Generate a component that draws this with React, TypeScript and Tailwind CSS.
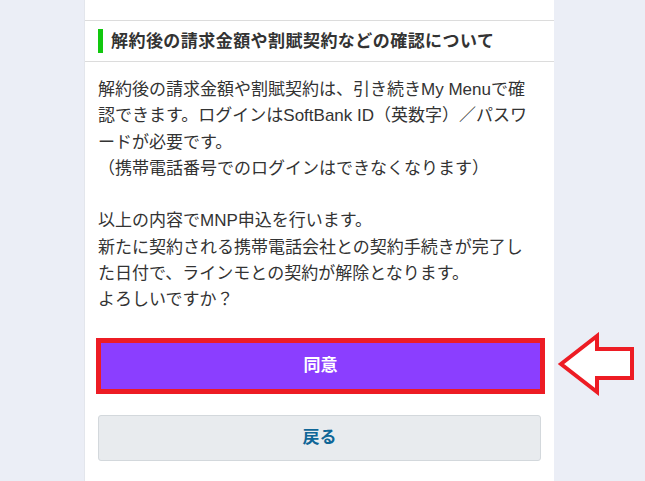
import React from 'react';

function LeftArrow() {
  return (
    <svg
      className="absolute left-[556px] top-[332px]"
      width="82"
      height="66"
      viewBox="0 0 82 66"
      fill="none"
    >
      <path
        d="M5 32 L41 4 L41 17 L76 17 L76 46 L41 46 L41 60 Z"
        fill="#ffffff"
        stroke="#ed1c24"
        strokeWidth="4"
        strokeLinejoin="miter"
      />
    </svg>
  );
}

export default function App() {
  return (
    <div
      className="relative w-[645px] h-[481px] overflow-hidden bg-[#ebeef6]"
      style={{ fontFamily: '"Liberation Sans", "Noto Sans CJK JP", sans-serif' }}
    >
      <div className="ml-[84px] w-[470px] h-full bg-white border-l border-[#e3e6ec]">
        <div className="h-[21px] border-b border-[#dcdcdc]" />

        <div className="h-[41px] flex items-center pl-[13px] border-b border-[#dcdcdc]">
          <div className="w-[5px] h-[24px] bg-[#12c80f]" />
          <h2 className="ml-[8px] text-[17px] font-bold text-[#333333] leading-none tracking-[0.45px]">
            解約後の請求金額や割賦契約などの確認について
          </h2>
        </div>

        <div className="pl-[13px] pr-[17px] pt-[15px] text-[17px] leading-[26.3px] text-[#333333]">
          <p>
            解約後の請求金額や割賦契約は、引き続きMy Menuで確認できます。ログインはSoftBank ID（英数字）／パスワードが必要です。
            <br />
            （携帯電話番号でのログインはできなくなります）
            <br />
            <br />
            以上の内容でMNP申込を行います。
            <br />
            新たに契約される携帯電話会社との契約手続きが完了した日付で、ラインモとの契約が解除となります。
            <br />
            よろしいですか？
          </p>
        </div>

        <div className="mt-[24px] ml-[11px] w-[449px] h-[56px] border-[5px] border-[#ed1c24] bg-[#8b3eff] flex items-center justify-center">
          <span className="text-white text-[17px] font-bold">同意</span>
        </div>

        <div className="mt-[21px] mx-[13px] h-[46px] rounded-[3px] border border-[#d3d8dc] bg-[#e8ebee] flex items-center justify-center">
          <span className="text-[#0f6697] text-[17px] font-bold">戻る</span>
        </div>
      </div>

      <LeftArrow />
    </div>
  );
}
